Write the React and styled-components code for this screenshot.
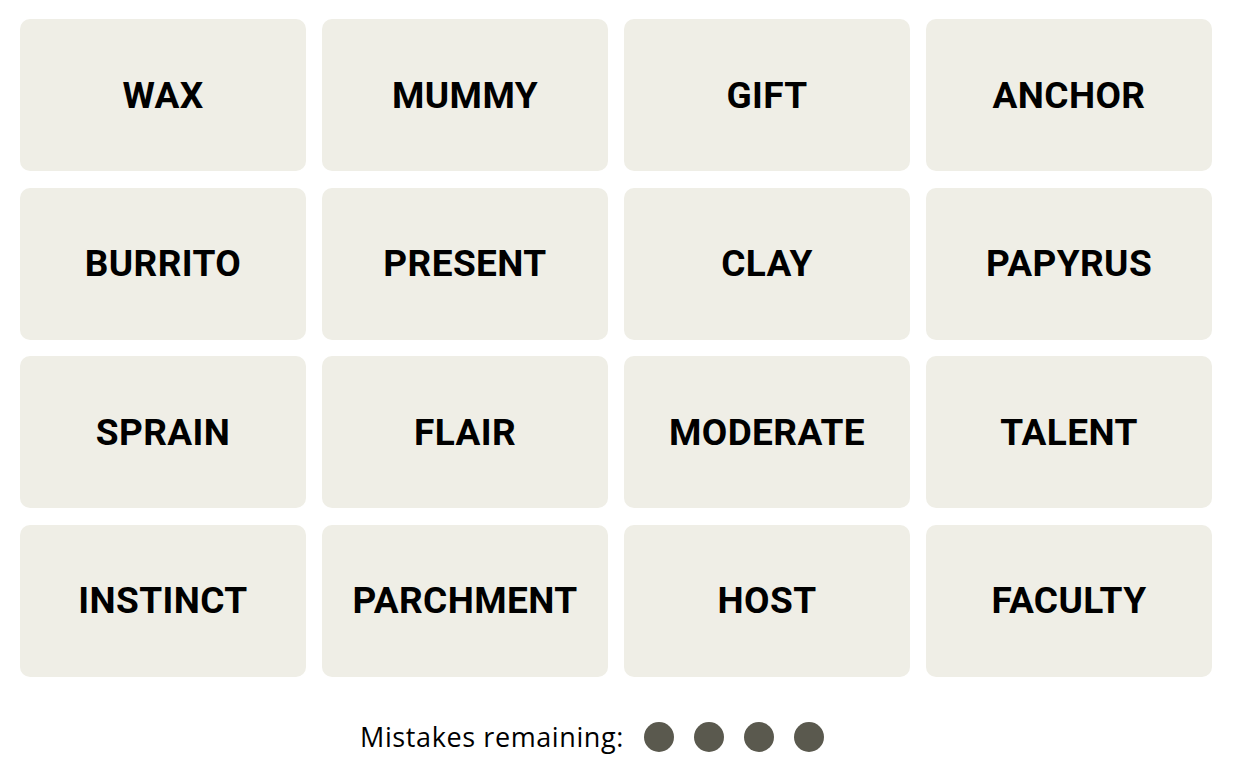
import React from "react"
import styled, { createGlobalStyle } from "styled-components"

const GlobalStyle = createGlobalStyle`
  html, body {
    margin: 0;
    padding: 0;
    background: #fff;
  }
  body {
    font-family: Roboto, "Liberation Sans", Arial, sans-serif;
    color: #000;
  }
`

const Page = styled.main`
  width: 1192px;
  padding: 19px 0 0 20px;
`

const Board = styled.div`
  display: grid;
  grid-template-columns: repeat(4, 286px);
  grid-auto-rows: 152px;
  column-gap: 16px;
  row-gap: 16.5px;
`

const Tile = styled.button`
  display: flex;
  align-items: center;
  justify-content: center;
  border: none;
  border-radius: 10px;
  background: #efeee6;
  font-family: Roboto, "Liberation Sans", Arial, sans-serif;
  font-weight: 700;
  font-size: 37px;
  letter-spacing: 0.4px;
  color: #000;
  text-transform: uppercase;
  cursor: pointer;
  padding: 0;
`

const Mistakes = styled.div`
  display: flex;
  align-items: center;
  justify-content: center;
  gap: 20px;
  margin: 43px 48px 0 0;
  font-family: "Open Sans", Roboto, sans-serif;
  font-size: 27px;
  letter-spacing: 0.6px;
  line-height: 34px;
  color: #000;
`

const Dots = styled.div`
  display: flex;
  gap: 20px;
`

const Dot = styled.span`
  display: block;
  width: 30px;
  height: 30px;
  border-radius: 50%;
  background: ${p => (p.used ? "transparent" : "#5a594e")};
`

const words = [
  "Wax", "Mummy", "Gift", "Anchor",
  "Burrito", "Present", "Clay", "Papyrus",
  "Sprain", "Flair", "Moderate", "Talent",
  "Instinct", "Parchment", "Host", "Faculty",
]

export default function App() {
  const remaining = 4
  return (
    <Page>
      <GlobalStyle />
      <Board>
        {words.map(w => (
          <Tile key={w}>{w}</Tile>
        ))}
      </Board>
      <Mistakes>
        <span>Mistakes remaining:</span>
        <Dots>
          {[0, 1, 2, 3].map(i => (
            <Dot key={i} used={i >= remaining} />
          ))}
        </Dots>
      </Mistakes>
    </Page>
  )
}
